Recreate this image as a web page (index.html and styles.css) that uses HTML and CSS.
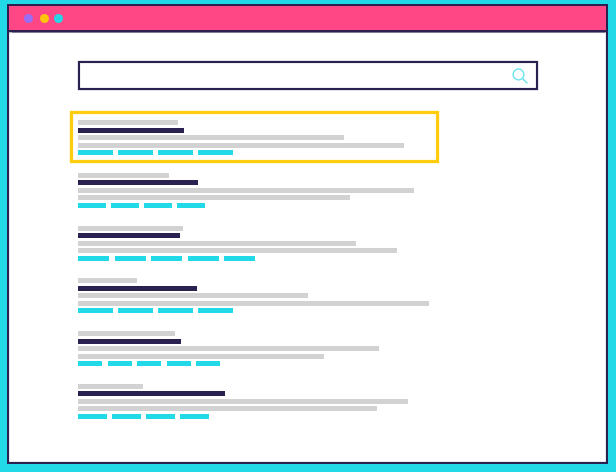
FILE: index.html
```html
<!DOCTYPE html>
<html>
<head>
    <meta charset="utf-8" />
    <title>search results</title>
    <link rel="stylesheet" href="styles.css">
</head>
<body>
    <div class="window">
        <div class="titlebar">
            <span class="dot purple"></span>
            <span class="dot yellow"></span>
            <span class="dot cyan"></span>
        </div>
        <div class="content">
            <div class="search">
                <svg class="search-icon" width="16" height="16" viewBox="0 0 16 16">
                    <circle cx="6.5" cy="6.5" r="5.4" />
                    <path d="M10.4 10.4 L15 15" />
                </svg>
            </div>
            <div class="results">
                <div class="result active">
                    <div class="bar grey" style="width:100px"></div>
                    <div class="bar navy" style="width:106px"></div>
                    <div class="bar grey" style="width:266px"></div>
                    <div class="bar grey" style="width:326px"></div>
                    <div class="tags t35">
                        <i></i><i></i><i></i><i></i>
                    </div>
                </div>
                <div class="result">
                    <div class="bar grey" style="width:91px"></div>
                    <div class="bar navy" style="width:120px"></div>
                    <div class="bar grey" style="width:336px"></div>
                    <div class="bar grey" style="width:272px"></div>
                    <div class="tags t27">
                        <i></i><i></i><i></i><i></i>
                    </div>
                </div>
                <div class="result">
                    <div class="bar grey" style="width:105px"></div>
                    <div class="bar navy" style="width:102px"></div>
                    <div class="bar grey" style="width:278px"></div>
                    <div class="bar grey" style="width:319px"></div>
                    <div class="tags t31">
                        <i></i><i></i><i></i><i></i><i></i>
                    </div>
                </div>
                <div class="result">
                    <div class="bar grey" style="width:59px"></div>
                    <div class="bar navy" style="width:119px"></div>
                    <div class="bar grey" style="width:230px"></div>
                    <div class="bar grey" style="width:351px"></div>
                    <div class="tags t35">
                        <i></i><i></i><i></i><i></i>
                    </div>
                </div>
                <div class="result">
                    <div class="bar grey" style="width:97px"></div>
                    <div class="bar navy" style="width:103px"></div>
                    <div class="bar grey" style="width:301px"></div>
                    <div class="bar grey" style="width:246px"></div>
                    <div class="tags t24">
                        <i></i><i></i><i></i><i></i><i></i>
                    </div>
                </div>
                <div class="result">
                    <div class="bar grey" style="width:65px"></div>
                    <div class="bar navy" style="width:147px"></div>
                    <div class="bar grey" style="width:330px"></div>
                    <div class="bar grey" style="width:299px"></div>
                    <div class="tags t29">
                        <i></i><i></i><i></i><i></i>
                    </div>
                </div>
            </div>
        </div>
    </div>
</body>
</html>
```

FILE: styles.css
```css
html, body {
    height: 100%;
}

body {
    margin: 0;
    padding: 4px 8px 8px 7px;
    box-sizing: border-box;
    background: #22d9e8;
}

.window {
    height: 460px;
    box-sizing: border-box;
    border: 2px solid #2a2150;
    background: #fff;
    box-shadow: inset 0 0 1px #2a2150;
    filter: blur(0.3px);
}

.titlebar {
    display: flex;
    align-items: center;
    gap: 5px;
    height: 26px;
    box-sizing: border-box;
    padding: 0 0 0 14.5px;
    background: #ff4785;
    border-bottom: 2px solid #2a2150;
    box-shadow: 0 0.5px 1px rgba(42, 33, 80, 0.6);
}

.dot {
    width: 9px;
    height: 9px;
    border-radius: 50%;
}

    .dot.purple {
        background: #9b6cf5;
    }

    .dot.yellow {
        margin-left: 2px;
        background: #ffc40d;
    }

    .dot.cyan {
        background: #27d5e5;
    }

.content {
    padding: 29px 0 0 69px;
}

.search {
    display: flex;
    align-items: center;
    justify-content: flex-end;
    width: 460px;
    height: 29px;
    box-sizing: border-box;
    padding-right: 8px;
    border: 2px solid #2a2150;
    box-shadow: 0 0 1px rgba(42, 33, 80, 0.7), inset 0 0 1px rgba(42, 33, 80, 0.7);
}

.search-icon {
    fill: none;
    stroke: #6fe4ee;
    stroke-width: 1.5;
    stroke-linecap: round;
}

.results {
    display: flex;
    flex-direction: column;
    gap: 17.75px;
    margin-top: 30px;
}

.result {
    position: relative;
    display: flex;
    flex-direction: column;
    gap: 2.5px;
}

    .result.active::before {
        content: "";
        position: absolute;
        top: -9px;
        left: -8px;
        width: 369px;
        height: 52px;
        box-sizing: border-box;
        border: 3px solid #ffcc0f;
        box-shadow: 0 0 1px #ffcc0f, inset 0 0 1px #ffcc0f;
    }

.bar {
    height: 5px;
}

    .bar.grey {
        background: #d2d2d2;
    }

    .bar.navy {
        background: #2a2150;
    }

.tags {
    display: flex;
    gap: 5px;
}

    .tags i {
        height: 5px;
        background: #22d9e8;
    }

    .t35 i {
        width: 35px;
    }

    .t27 {
        gap: 5.5px;
    }

    .t27 i {
        width: 27.5px;
    }

    .t31 {
        gap: 5.5px;
    }

    .t31 i {
        width: 31px;
    }

    .t24 {
        gap: 5.5px;
    }

    .t24 i {
        width: 24px;
    }

    .t29 i {
        width: 29px;
    }
```
